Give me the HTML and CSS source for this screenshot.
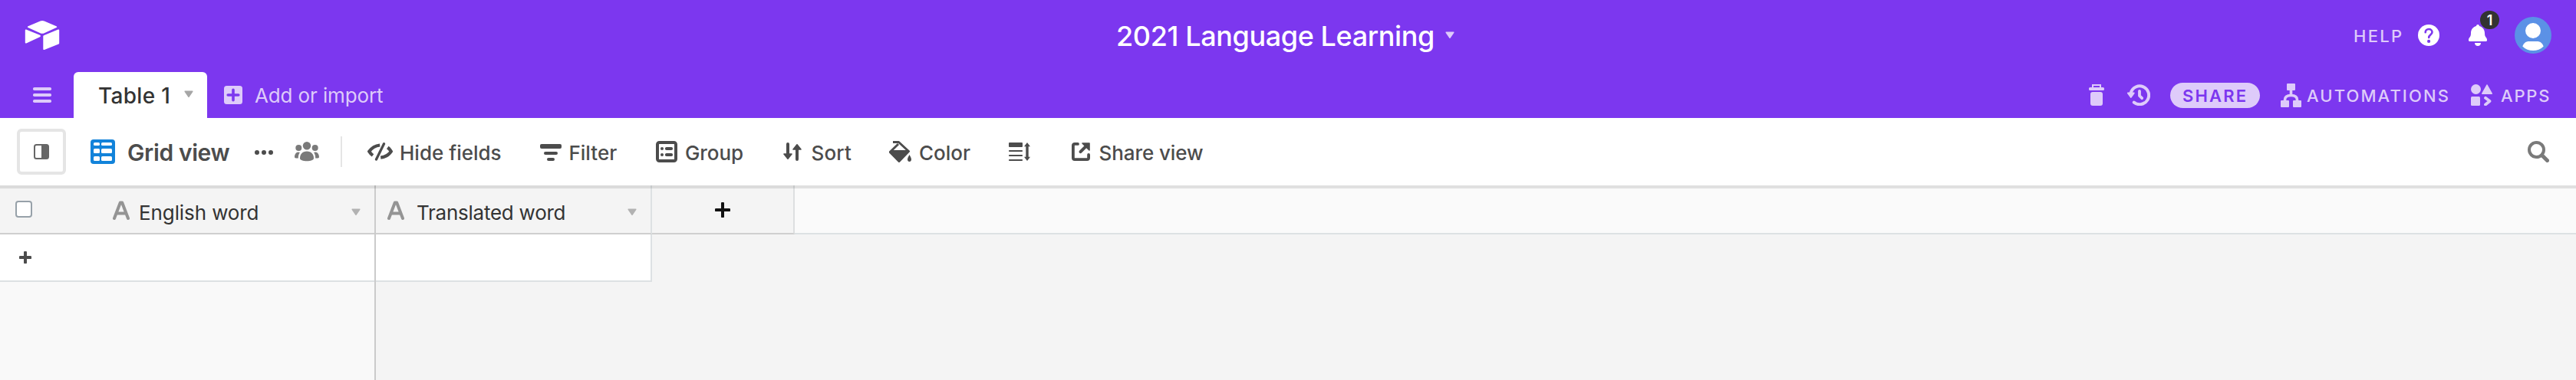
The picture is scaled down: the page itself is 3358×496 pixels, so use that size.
FILE: index.html
```html
<!DOCTYPE html>
<html lang="en">
<head>
<meta charset="utf-8">
<title>2021 Language Learning</title>
<link rel="stylesheet" href="styles.css">
</head>
<body>
<header class="topbar">
  <div class="topbar-main">
    <svg class="logo" width="46" height="40" viewBox="0 0 46 40" fill="#fff">
      <path d="M20.5 1.6 4.6 8.2c-1 .4-1 1.400 0 1.800L20.500 17.200c1.700.7 3.500.7 5.200 0L41.500 10c1-.4 1-1.400 0-1.800L25.700 1.600c-1.700-.7-3.500-.7-5.200 0z"/>
      <path d="M24.300 21.200v16.800c0 .8.8 1.200 1.500.9l18.700-7.500c.4-.2.700-.6.700-1V13.500c0-.8-.8-1.200-1.500-.9L25 20.200c-.4.200-.7.500-.7 1z"/>
      <path d="M20 22.200 2.300 30.500c-.7.300-1.500-.1-1.500-.9V13.700c0-.9.900-1.400 1.800-1L20 19.700c1.200.5 1.200 1.900 0 2.500z"/>
    </svg>
    <h1 class="base-name">2021 Language Learning</h1>
    <svg width="12" height="10" viewBox="0 0 12 10"><path d="M1.200.5h9.600q1.200 0 .6 1.200L6.800 8.600q-.8 1-1.600 0L.6 1.700Q0 .5 1.200.5z" fill="#decbfa"/></svg>
    <div class="account">
      <span class="caps help">HELP</span>
      <svg width="28" height="28" viewBox="0 0 28 28"><circle cx="14" cy="14" r="14" fill="#fff"/><path d="M9.700 10.300c0-2.600 1.900-4.300 4.400-4.300s4.400 1.700 4.400 4c0 3.300-4.300 3.300-4.300 7" fill="none" stroke="#7c37ef" stroke-width="2.600" stroke-linecap="round"/><circle cx="14.100" cy="21.900" r="2.100" fill="#7c37ef"/></svg>
      <div class="bell">
        <svg width="24" height="28" viewBox="0 0 24 28" fill="#fff"><path d="M12 0c1.100 0 1.900.8 2 1.900C18.200 3 21 6.500 21 11c0 3 .4 4.400 1.800 6 .9 1 1.200 1.800 1.200 3v.8c0 .7-.5 1.200-1.200 1.200H1.200C.5 22 0 21.500 0 20.800V20c0-1.200.3-2 1.200-3C2.600 15.400 3 14 3 11c0-4.500 2.800-8 7-9.100C10.100.8 10.900 0 12 0zM8 24h8c0 2.400-1.700 4-4 4s-4-1.600-4-4z"/></svg>
        <span class="badge">1</span>
      </div>
      <svg class="avatar" width="48" height="48" viewBox="0 0 48 48"><circle cx="24" cy="24" r="24" fill="#5b91e6"/><circle cx="24" cy="18" r="10" fill="#fff"/><path d="M10.300 38.500C12 34 15 32 18.500 32h11c3.500 0 6.500 2 8.200 6.500C34 42.300 29.300 44 24 44s-10-1.700-13.700-5.500z" fill="#fff"/></svg>
    </div>
  </div>
  <nav class="tabs">
    <svg class="menu" width="24" height="20" viewBox="0 0 24 20" fill="#decbfa"><rect width="24" height="4" rx="1.800"/><rect y="8" width="24" height="4" rx="1.800"/><rect y="16" width="24" height="4" rx="1.800"/></svg>
    <div class="tab"><span class="tab-name">Table 1</span><svg width="12" height="10" viewBox="0 0 12 10"><path d="M1.200.5h9.600q1.200 0 .6 1.200L6.800 8.600q-.8 1-1.600 0L.6 1.700Q0 .5 1.200.5z" fill="#a6a6a6"/></svg></div>
    <svg class="add-icon" width="24" height="24" viewBox="0 0 24 24"><rect width="24" height="24" rx="3.500" fill="#decbfa"/><path d="M12 5.200v13.600M5.200 12h13.600" stroke="#7c37ef" stroke-width="3.600" stroke-linecap="round"/></svg>
    <span class="add-label">Add or import</span>
    <div class="base-actions">
      <svg width="20" height="28" viewBox="0 0 20 28" fill="#decbfa"><path d="M4 0h12v4h2.500a1.500 1.500 0 0 1 1.500 1.500v1A1.500 1.500 0 0 1 18.500 8h-17A1.500 1.500 0 0 1 0 6.500v-1A1.500 1.500 0 0 1 1.500 4H4zm2 2v2h8V2z" fill-rule="evenodd"/><rect x="2" y="10" width="16" height="18" rx="3"/></svg>
      <svg class="history" width="30" height="28" viewBox="0 0 30 28" fill="none" stroke="#decbfa" stroke-linecap="round"><path d="M4.800 11A11.900 11.900 0 1 1 8.800 23.600" stroke-width="4"/><path d="M.8 11.500h8L4.800 17z" fill="#decbfa" stroke-width="1.800" stroke-linejoin="round"/><path d="M16 9v6l3.200 3.200" stroke-width="3.800" stroke-linejoin="round"/></svg>
      <span class="share">SHARE</span>
      <svg class="automations-icon" width="28" height="31" viewBox="0 0 28 31" fill="#decbfa"><rect x="8" width="11" height="9" rx="1"/><rect y="22" width="11" height="9" rx="1"/><rect x="16" y="22" width="11" height="9" rx="1"/><path d="M13.500 8v6M5.500 23v-1.500c0-4 3-6 8-6s8 2 8 6V23" fill="none" stroke="#decbfa" stroke-width="3.600"/></svg>
      <span class="caps automations">AUTOMATIONS</span>
      <svg width="28" height="28" viewBox="0 0 28 28" fill="#decbfa"><circle cx="6.500" cy="6.500" r="6.500"/><path d="M20.300.8q.7-1.200 1.400 0l6 10.800q.7 1.400-.7 1.400H15q-1.400 0-.7-1.400z"/><rect y="16" width="12" height="12" rx="1.500"/><path d="m19 17.800 5.500 4.200-5.500 4.500" fill="none" stroke="#decbfa" stroke-width="3.800" stroke-linecap="round" stroke-linejoin="round"/></svg>
      <span class="caps apps">APPS</span>
    </div>
  </nav>
</header>
<div class="toolbar">
  <div class="sidebar-toggle"><svg width="20" height="20" viewBox="0 0 20 20"><rect x="1" y="1" width="18" height="18" rx="2.500" fill="#fff" stroke="#666" stroke-width="2"/><path d="M10 1h7q2 0 2 2v14q0 2-2 2h-7z" fill="#666"/></svg></div>
  <svg class="grid-icon" width="32" height="32" viewBox="0 0 32 32"><rect width="32" height="32" rx="4" fill="#1283da"/><g fill="#fff"><rect x="4" y="4" width="8" height="4" rx="1.500"/><rect x="14" y="4" width="14" height="4" rx="1.500"/><rect x="4" y="12" width="8" height="6" rx="1.500"/><rect x="14" y="12" width="14" height="6" rx="1.500"/><rect x="4" y="22" width="8" height="6" rx="1.500"/><rect x="14" y="22" width="14" height="6" rx="1.500"/></g></svg>
  <span class="view-name">Grid view</span>
  <svg class="dots" width="24" height="6" viewBox="0 0 24 6" fill="#4c4c4c"><circle cx="3" cy="3" r="3"/><circle cx="12" cy="3" r="3"/><circle cx="21" cy="3" r="3"/></svg>
  <svg class="people" width="32" height="26" viewBox="0 0 32 26" fill="#7a7a7a"><circle cx="16" cy="5.200" r="5.200"/><circle cx="5.300" cy="8" r="4"/><circle cx="26.700" cy="8" r="4"/><path d="M7 21.500c0-5 3-9 9-9s9 4 9 9c0 2.500-4 3.800-9 3.800s-9-1.300-9-3.800zM7 14C5.300 16 4.800 18.500 4.800 21.500 2 21.800 0 21.200 0 20c0-4.500 3-8 7-6zM25 14c1.700 2 2.200 4.500 2.200 7.500 2.800.3 4.800-.3 4.800-1.500 0-4.500-3-8-7-6z"/></svg>
  <i class="divider"></i>
  <svg class="hide-icon" width="33" height="24" viewBox="0 0 33 24" fill="none" stroke="#4c4c4c"><path d="M16.200 3.500C9.600 4.300 5 7.800 2.200 11.700c1.200 2 2.800 3.700 4.800 5.200" stroke-width="4.200"/><path d="M26.300 6.500c1.900 1.400 3.500 3.200 4.600 5.200-3 4.500-7.700 7.200-13.700 7.900" stroke-width="4.200"/><path d="M21.500 1.800 11.500 22" stroke-width="3.300" stroke-linecap="round"/></svg>
  <span class="tool hide">Hide fields</span>
  <svg width="28" height="24" viewBox="0 0 28 24" fill="#4c4c4c"><rect y="2" width="28" height="6" rx="2"/><rect x="5" y="12" width="18" height="4" rx="2"/><rect x="9" y="20" width="10" height="4" rx="2"/></svg>
  <span class="tool filter">Filter</span>
  <svg width="28" height="28" viewBox="0 0 28 28"><rect x="2" y="2" width="24" height="24" rx="2.500" fill="none" stroke="#4c4c4c" stroke-width="4"/><g fill="#4c4c4c"><circle cx="8" cy="10" r="2"/><rect x="12" y="8" width="10" height="4" rx="1.800"/><circle cx="8" cy="18" r="2"/><rect x="12" y="16" width="10" height="4" rx="1.800"/></g></svg>
  <span class="tool group">Group</span>
  <svg width="24" height="24" viewBox="0 0 24 24" fill="#4c4c4c" stroke="#4c4c4c" stroke-linecap="round" stroke-linejoin="round"><path d="M6 2v14M18 22V8" stroke-width="4"/><path d="M1 15h10l-5 6.200zM13 9h10L18 2.800z" stroke-width="1.600"/></svg>
  <span class="tool sort">Sort</span>
  <svg width="29" height="28" viewBox="0 0 29 28"><path d="M5 1.500h7.500L25.500 13.500 13 26.500 1.200 14.500 12 4" fill="none" stroke="#4c4c4c" stroke-width="3" stroke-linejoin="round"/><path d="M2.500 12h22v2L13 26.500 1 14.500z" fill="#4c4c4c"/><path d="M26.500 18c1.300 2.500 2.500 4.300 2.500 6.300 0 1.500-1 2.700-2.500 2.700S24 25.800 24 24.300c0-2 1.200-3.800 2.500-6.300z" fill="#4c4c4c"/></svg>
  <span class="tool color">Color</span>
  <svg width="28" height="24" viewBox="0 0 28 24" fill="#4c4c4c"><rect width="18" height="6" rx="1"/><rect y="10" width="18" height="2" rx=".8"/><rect y="16" width="18" height="2" rx=".8"/><rect y="22" width="18" height="2" rx=".8"/><path d="M24 0 28 5.300h-2.300v13.400H28L24 24l-4-5.300h2.300V5.300H20z"/></svg>
  <svg class="share-icon" width="24" height="24" viewBox="0 0 24 24" fill="none" stroke="#4c4c4c" stroke-width="3.800" stroke-linecap="round" stroke-linejoin="round"><path d="M8 1.900H4q-2.100 0-2.100 2.100v16q0 2.100 2.100 2.100h16q2.100 0 2.100-2.100v-4"/><path d="m11.500 12.200 7-7" stroke-width="4"/><path d="M14 1h9v9z" fill="#4c4c4c" stroke-width="1.600"/></svg>
  <span class="tool share-view">Share view</span>
  <svg class="search" width="28" height="28" viewBox="0 0 28 28" fill="none" stroke="#7a7a7a"><circle cx="11.500" cy="11.500" r="9.500" stroke-width="4"/><path d="m19 19 6.500 6.500" stroke-width="5" stroke-linecap="round"/></svg>
</div>
<main class="grid">
  <section class="pane frozen">
    <div class="head">
      <div class="cell first">
        <i class="checkbox"></i>
        <svg class="type" width="22" height="25" viewBox="0 0 22 25" fill="none" stroke="#949494" stroke-width="4" stroke-linecap="round" stroke-linejoin="round"><path d="M2 23 9.800 2.500h2.400L20 23M5.500 16.500h11"/></svg>
        <span class="field english">English word</span>
        <svg class="caret" width="12" height="10" viewBox="0 0 12 10"><path d="M1.200.5h9.600q1.200 0 .6 1.200L6.800 8.600q-.8 1-1.600 0L.6 1.700Q0 .5 1.200.5z" fill="#b2b2b2"/></svg>
      </div>
    </div>
    <div class="row"><svg width="16" height="16" viewBox="0 0 16 16"><path d="M8 1.500v13M1.500 8h13" stroke="#4c4c4c" stroke-width="4" stroke-linecap="round"/></svg></div>
  </section>
  <section class="pane scrolling">
    <div class="head">
      <div class="cell second">
        <svg class="type" width="22" height="25" viewBox="0 0 22 25" fill="none" stroke="#949494" stroke-width="4" stroke-linecap="round" stroke-linejoin="round"><path d="M2 23 9.800 2.500h2.400L20 23M5.500 16.500h11"/></svg>
        <span class="field translated">Translated word</span>
        <svg class="caret" width="12" height="10" viewBox="0 0 12 10"><path d="M1.200.5h9.600q1.200 0 .6 1.200L6.800 8.600q-.8 1-1.600 0L.6 1.700Q0 .5 1.200.5z" fill="#b2b2b2"/></svg>
      </div>
      <div class="cell add-field"><svg width="20" height="20" viewBox="0 0 20 20"><path d="M10 1.500v17M1.500 10h17" stroke="#111" stroke-width="4" stroke-linecap="round"/></svg></div>
      <div class="cell rest"></div>
    </div>
    <div class="row empty"></div>
  </section>
</main>
</body>
</html>
```
FILE: styles.css
```css
* { box-sizing: border-box; }
body {
  margin: 0;
  height: 496px;
  display: flex;
  flex-direction: column;
  overflow: hidden;
  background: #fff;
  color: #333;
  font-family: Inter, "Liberation Sans", sans-serif;
  font-size: 26px;
}
svg { display: block; flex: none; }
span, h1 { white-space: nowrap; flex: none; }

/* Purple header */
.topbar { height: 154px; background: #7c37ef; }
.topbar-main { display: flex; align-items: center; height: 92px; padding: 0 32px; }
.base-name {
  width: 429px;
  margin: 2px 0 0 1377px;
  color: #fff;
  font-size: 36px;
  font-weight: 500;
  letter-spacing: -0.39px;
  line-height: 44px;
}
.account { display: flex; align-items: center; margin-left: auto; }
.caps {
  padding-top: 2px;
  color: #decbfa;
  font-size: 22px;
  font-weight: 500;
  line-height: 28px;
}
.help { width: 84px; letter-spacing: 2.3px; }
.bell { position: relative; margin-left: 38px; }
.badge {
  position: absolute;
  top: -18px;
  left: 15px;
  width: 25px;
  height: 24px;
  border-radius: 12px;
  background: #333;
  color: #fff;
  font-size: 18px;
  font-weight: 600;
  line-height: 25px;
  text-align: center;
}
.avatar { margin-left: 36px; }

.tabs { display: flex; align-items: center; height: 62px; }
.menu { margin: 2px 0 0 43px; }
.tab {
  display: flex;
  align-items: center;
  align-self: flex-end;
  width: 174px;
  height: 60px;
  margin-left: 29px;
  padding-left: 32px;
  border-radius: 6px 6px 0 0;
  background: #fff;
}
.tab svg { margin-bottom: 3px; }
.tab-name { width: 112px; padding-top: 1px; font-size: 28px; font-weight: 500; letter-spacing: 0.3px; }
.add-icon { margin: 2px 0 0 22px; }
.add-label { margin: 3px 0 0 16px; color: #decbfa; letter-spacing: -0.12px; }
.base-actions { display: flex; align-items: center; margin-left: auto; padding-top: 2px; }
.history { margin-left: 30px; }
.share {
  width: 117px;
  height: 33px;
  margin-left: 26px;
  padding-left: 16px;
  border-radius: 17px;
  background: #decbfa;
  color: #7c37ef;
  font-size: 22px;
  font-weight: 600;
  letter-spacing: 2.2px;
  line-height: 34px;
}
.automations-icon { margin-left: 27px; }
.automations { width: 214px; margin-left: 6px; letter-spacing: 2.1px; }
.apps { width: 98px; margin-left: 11px; letter-spacing: 1.8px; }

/* View toolbar */
.toolbar { display: flex; align-items: center; height: 88px; padding: 0 35px 0 22px; color: #4c4c4c; }
.sidebar-toggle {
  display: flex;
  align-items: center;
  justify-content: center;
  width: 64px;
  height: 60px;
  border: 4px solid #e5e5e5;
  border-radius: 6px;
}
.grid-icon { margin-left: 32px; }
.view-name { width: 166px; margin: 2px 0 0 16px; font-size: 30px; font-weight: 600; letter-spacing: -0.38px; }
.dots { margin-top: 2px; }
.people { margin-left: 28px; }
.divider { width: 2px; height: 40px; margin-left: 28px; background: #e5e5e5; }
.hide-icon { margin-left: 33px; }
.tool { padding-top: 2px; font-weight: 500; }
.hide { width: 183px; margin-left: 9px; }
.filter { width: 113.5px; margin-left: 9.5px; }
.group { width: 128px; margin-left: 10px; letter-spacing: -0.09px; }
.sort { width: 101.5px; margin-left: 12.5px; letter-spacing: 0.15px; }
.color { width: 117px; margin-left: 10px; }
.share-icon { margin-left: 54px; }
.share-view { margin-left: 11.5px; letter-spacing: -0.09px; }
.search { margin-left: auto; }

/* Records grid */
.grid { position: relative; flex: 1; display: flex; background: #f4f4f4; }
.grid::before {
  content: "";
  position: absolute;
  top: 0;
  left: 0;
  right: 0;
  height: 4px;
  background: rgba(0, 0, 0, 0.1);
}
.frozen { width: 490px; border-right: 2px solid #cbcbcb; background: #f9f9f9; }
.scrolling { flex: 1; }
.head { display: flex; height: 64px; }
.cell { display: flex; align-items: center; border-bottom: 2px solid #cfcfcf; background: #f4f4f4; }
.first { width: 488px; padding-left: 20px; }
.checkbox { width: 22px; height: 22px; border: 2px solid #97a1a9; border-radius: 4px; background: #fff; }
.type { margin-top: 2px; }
.first .type { margin-left: 105px; }
.field { padding-top: 8px; }
.english { width: 277px; margin-left: 12px; letter-spacing: -0.1px; }
.caret { margin-top: 7px; }
.second { width: 360px; padding-left: 15px; border-right: 2px solid #dde1e3; }
.translated { width: 275px; margin-left: 16px; letter-spacing: -0.25px; }
.add-field { width: 186px; justify-content: center; border-right: 2px solid #dddfe0; }
.add-field svg { margin-top: 2px; }
.rest { flex: 1; border-color: #dde1e3; background: #fafafa; }
.row { display: flex; align-items: center; height: 62px; padding-left: 25px; border-bottom: 2px solid #dde1e3; background: #fff; }
.empty { width: 360px; border-right: 2px solid #dde1e3; }
```
